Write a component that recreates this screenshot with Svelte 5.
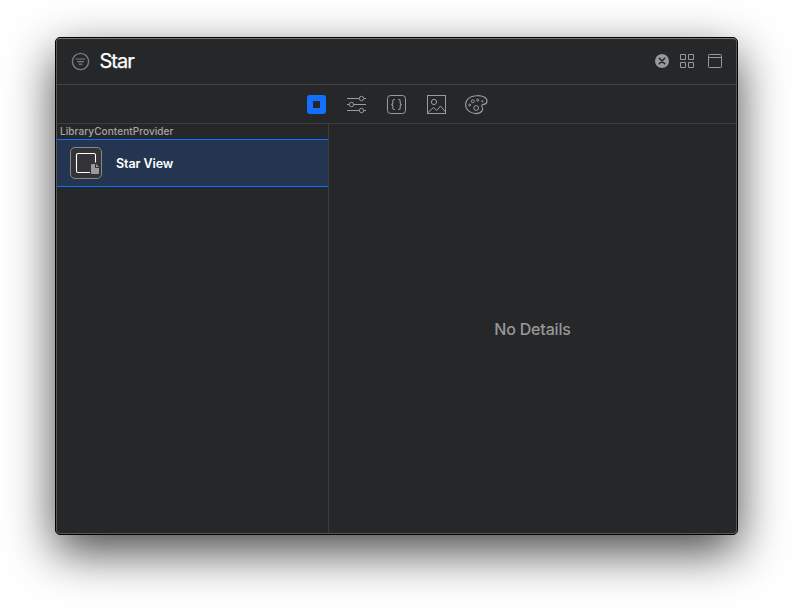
<script>
  let query = $state('Star');
  const results = [{ name: 'Star View' }];
</script>

<main class="desktop">
  <section class="window">
    <div class="content">
      <header class="search">
        <svg class="filter" width="19" height="19" viewBox="0 0 19 19" fill="none" stroke="#7b7c7d">
          <circle cx="9.5" cy="9.5" r="8.1" stroke-width="1.400" />
          <path d="M5 7h9M6.500 9.600h6M8 12.200h3" stroke-width="1.200" stroke-linecap="round" />
        </svg>
        <span class="query">{query}</span>
        <svg class="clear" width="14" height="14" viewBox="0 0 14 14">
          <circle cx="7" cy="7" r="7" fill="#98999a" />
          <path d="M4.300 4.300l5.400 5.400M9.700 4.300L4.300 9.700" stroke="#252628" stroke-width="1.600" stroke-linecap="round" />
        </svg>
        <svg class="grid" width="14" height="14" viewBox="0 0 14 14" fill="none" stroke="#989899">
          <path d="M.5 .5h5v5h-5zM8.500 .5h5v5h-5zM.5 8.500h5v5h-5zM8.500 8.500h5v5h-5z" />
        </svg>
        <svg class="panel" width="14" height="14" viewBox="0 0 14 14" fill="none" stroke="#989899">
          <rect x=".5" y=".5" width="13" height="13" rx=".8" />
          <path d="M1 3.500h12" />
        </svg>
      </header>

      <nav class="tabs">
        <svg width="23" height="23" viewBox="0 0 23 23">
          <path fill="#136fff" fill-rule="evenodd" d="M5 2h13a3 3 0 0 1 3 3v13a3 3 0 0 1-3 3H5a3 3 0 0 1-3-3V5a3 3 0 0 1 3-3zM8.500 8a.5.5 0 0 0-.5.5v6a.5.5 0 0 0 .5.5h6a.5.5 0 0 0 .5-.5v-6a.5.5 0 0 0-.5-.5z" />
        </svg>
        <svg width="23" height="23" viewBox="0 0 23 23" fill="none" stroke="#9a9b9c">
          <path d="M2 5.500h12.200M18.800 5.500H21M2 11.500h2.200M8.800 11.500H21M2 17.500h12.200M18.800 17.500H21" />
          <circle cx="16.500" cy="5.500" r="2.200" />
          <circle cx="6.500" cy="11.500" r="2.200" />
          <circle cx="16.500" cy="17.500" r="2.200" />
        </svg>
        <svg width="23" height="23" viewBox="0 0 23 23" fill="none" stroke="#9a9b9c">
          <rect x="2.500" y="2.500" width="18" height="18" rx="3" />
          <path d="M9.900 6.500h-.4q-1.700 0-1.700 1.500v1.900q0 1.300-1.500 1.600q1.500.3 1.500 1.600v1.900q0 1.500 1.700 1.500h.4M13.100 6.500h.4q1.700 0 1.700 1.500v1.900q0 1.300 1.500 1.600q-1.500.3-1.500 1.600v1.900q0 1.500-1.700 1.500h-.4" stroke-width="1.100" />
        </svg>
        <svg width="23" height="23" viewBox="0 0 23 23" fill="none" stroke="#9a9b9c">
          <rect x="2.500" y="2.500" width="18" height="18" />
          <circle cx="9" cy="9" r="2.600" />
          <path d="M3 19.500l5.500-5 3.200 3L15.500 13l5 6" />
        </svg>
        <svg width="23" height="23" viewBox="0 0 23 23" fill="none" stroke="#9a9b9c">
          <path d="M11.300 2.700C17.700 2.200 22.300 5 22 8.400c-.2 2.100-1.700 2.800-3.500 3-1.600.2-2.200 1.200-1.500 2.300 1.100 1.600 1 2.900.1 4.200-1.200 1.700-3.400 2.700-6 2.700C5 20.600.6 16.500.6 11.600.6 6.600 5 3 11.300 2.700z" stroke-width="1.100" />
          <circle cx="4.700" cy="12" r="1" />
          <circle cx="7.800" cy="8.300" r="1.500" />
          <circle cx="12.700" cy="7.100" r="1.100" />
          <circle cx="17.300" cy="8.200" r=".7" />
          <circle cx="11.200" cy="15" r="2.400" />
        </svg>
      </nav>

      <div class="body">
        <aside class="list">
          <h2>LibraryContentProvider</h2>
          {#each results as item}
            <div class="row">
              <svg width="32" height="32" viewBox="0 0 32 32" fill="none">
                <rect x=".5" y=".5" width="31" height="31" rx="4.500" fill="#343436" stroke="#88898b" />
                <path d="M20 25.500H8a1.500 1.500 0 0 1-1.500-1.500V8A1.500 1.500 0 0 1 8 6.500h16A1.500 1.500 0 0 1 25.500 8v7.500" stroke="#fff" stroke-width="1.100" />
                <path d="M22 17h3v4h4v5a1 1 0 0 1-1 1h-6a1 1 0 0 1-1-1v-8a1 1 0 0 1 1-1zM26 17l3 3h-3z" fill="#9b9b9c" />
              </svg>
              <span>{item.name}</span>
            </div>
          {/each}
        </aside>
        <div class="details">No Details</div>
      </div>
    </div>
  </section>
</main>

<style>
  :global(body) {
    margin: 0;
    background: #fff;
  }
  .desktop {
    box-sizing: border-box;
    width: 793px;
    height: 608px;
    padding: 37px 55px 0;
    overflow: hidden;
    font-family: Inter, 'Liberation Sans', sans-serif;
  }
  .window {
    box-sizing: border-box;
    width: 683px;
    height: 498px;
    border: 1px solid #020202;
    border-radius: 5px;
    background: #020202;
    box-shadow: 0 17px 48px rgba(0, 0, 0, 0.72);
  }
  .content {
    box-sizing: border-box;
    height: 496px;
    border: 1px solid #555758;
    border-top-color: #747677;
    border-radius: 4px;
    background: #262729;
    display: flex;
    flex-direction: column;
    overflow: hidden;
  }
  svg {
    display: block;
    flex: none;
  }
  .search {
    box-sizing: border-box;
    height: 46px;
    flex: none;
    display: flex;
    align-items: flex-start;
    padding: 13px 14px 0;
    border-bottom: 1px solid #414244;
  }
  .query {
    flex: 1;
    margin: -3px 0 0 9.500px;
    line-height: 24px;
    font-size: 20px;
    letter-spacing: -1px;
    color: #fff;
    -webkit-text-stroke: 0.250px #fff;
  }
  .clear {
    margin-top: 2px;
  }
  .grid {
    margin: 2px 0 0 11px;
  }
  .panel {
    margin: 2px 0 0 14px;
  }
  .tabs {
    box-sizing: border-box;
    height: 39px;
    flex: none;
    display: flex;
    justify-content: center;
    gap: 17px;
    padding-top: 8px;
    border-bottom: 1px solid #3b3c3e;
  }
  .body {
    flex: 1;
    display: flex;
  }
  .list {
    width: 271px;
    border-right: 1px solid #3b3c3e;
  }
  h2 {
    margin: 0;
    height: 15px;
    padding-left: 3px;
    font-size: 10px;
    line-height: 15px;
    font-weight: 450;
    letter-spacing: 0.080px;
    color: #a6a6a7;
  }
  .row {
    box-sizing: border-box;
    height: 48px;
    display: flex;
    align-items: center;
    gap: 14px;
    padding-left: 13px;
    background: #233551;
    border: solid #136fff;
    border-width: 1px 0;
    font-size: 12.500px;
    font-weight: 600;
    letter-spacing: -0.080px;
    color: #fff;
  }
  .details {
    flex: 1;
    display: flex;
    align-items: center;
    justify-content: center;
    font-size: 16px;
    font-weight: 500;
    letter-spacing: -0.170px;
    color: #979798;
  }
</style>
